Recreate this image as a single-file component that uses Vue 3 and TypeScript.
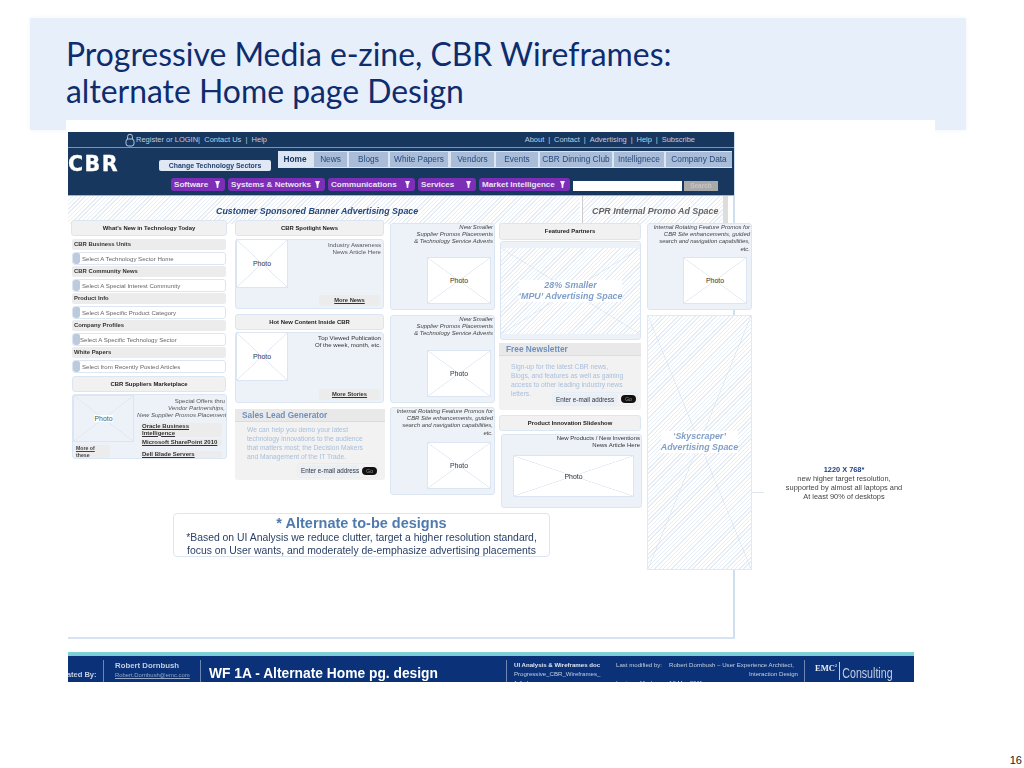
<script setup lang="ts">
interface Tab { label: string; w: number; active?: boolean }
const tabs: Tab[] = [
  { label: 'Home', w: 34, active: true }, { label: 'News', w: 33 }, { label: 'Blogs', w: 39 },
  { label: 'White Papers', w: 58 }, { label: 'Vendors', w: 43 }, { label: 'Events', w: 42 },
  { label: 'CBR Dinning Club', w: 72 }, { label: 'Intellignece', w: 50 }, { label: 'Company Data', w: 66 },
]
const menus: { label: string; w: number }[] = [
  { label: 'Software', w: 54 }, { label: 'Systems & Networks', w: 97 }, { label: 'Communications', w: 87 },
  { label: 'Services', w: 58 }, { label: 'Market Intelligence', w: 91 },
]
const groups: { title: string; select: string; tight?: boolean }[] = [
  { title: 'CBR Business Units', select: 'Select A Technology Sector Home' },
  { title: 'CBR Community News', select: 'Select A Special Interest Community' },
  { title: 'Product Info', select: 'Select A Specific Product Category' },
  { title: 'Company Profiles', select: 'Select A Specific Technology Sector', tight: true },
  { title: 'White Papers', select: 'Select from Recently Posted Articles' },
]
const topRight = ['About', 'Contact', 'Advertising', 'Help', 'Subscribe']
</script>

<template>
  <div class="slide">
    <header class="band">
      <h1>Progressive Media e-zine, CBR Wireframes:<br />alternate Home page Design</h1>
    </header>

    <main class="sheet">
      <section class="wire">
        <div class="topbar">
          <div class="top-left">
            <svg class="lock" width="10" height="14" viewBox="0 0 10 14">
              <path d="M2.6 6V3.6a2.4 2.4 0 0 1 4.8 0V6" fill="none" stroke="#b9cbe2" stroke-width="1" />
              <rect x="1" y="6" width="8" height="7" rx="2.4" fill="none" stroke="#b9cbe2" stroke-width="1" />
            </svg>
            <span>Register or LOGIN|&nbsp; Contact Us &nbsp;|&nbsp; Help</span>
          </div>
          <div class="top-right">
            <template v-for="(t, i) in topRight" :key="t">
              <span>{{ t }}</span><i v-if="i < topRight.length - 1">|</i>
            </template>
          </div>
        </div>

        <nav class="nav">
          <div class="nav-a">
            <div class="logo">CBR</div>
            <div class="sectors">Change Technology Sectors</div>
            <div class="tabs">
              <span v-for="t in tabs" :key="t.label" class="tab" :class="{ active: t.active }" :style="{ width: t.w + 'px' }">{{ t.label }}</span>
            </div>
          </div>
          <div class="nav-b">
            <span v-for="m in menus" :key="m.label" class="menu" :style="{ width: m.w + 'px' }">
              {{ m.label }}
              <svg width="5" height="7" viewBox="0 0 5 7"><path d="M0 0h5L3.6 3.2 3.2 7H1.8L1.4 3.2z" fill="#f2eef8" /></svg>
            </span>
            <div class="search-input"></div>
            <div class="search-btn">Search</div>
          </div>
        </nav>

        <div class="banners">
          <div class="banner hatch"><b>Customer Sponsored Banner Advertising Space</b></div>
          <div class="promo hatch"><b>CPR Internal Promo Ad Space</b></div>
        </div>

        <div class="grid">
          <div class="c1">
            <div class="head">What's New in Technology Today</div>
            <div class="list">
              <template v-for="g in groups" :key="g.title">
                <div class="gray">{{ g.title }}</div>
                <div class="select" :class="{ tight: g.tight }"><i class="blob"></i>{{ g.select }}</div>
              </template>
            </div>
            <div class="head market">CBR Suppliers Marketplace</div>
            <div class="suppliers">
              <div class="sup-left">
                <div class="photo sup-photo"><span>Photo</span></div>
                <div class="more-of"><u>More of<br />these</u></div>
              </div>
              <div class="sup-right">
                <p>Special Offers thru<br /><em>Vendor Partnerships,</em><br /><em>New Supplier Promos Placement</em></p>
                <div class="links">
                  <u>Oracle Business<br />Intelligence</u>
                  <u>Microsoft SharePoint 2010</u>
                  <u>Dell Blade Servers</u>
                </div>
              </div>
            </div>
          </div>

          <div class="c2">
            <div class="head">CBR Spotlight News</div>
            <div class="story">
              <div class="photo story-photo"><span>Photo</span></div>
              <div class="story-text">
                <p>Industry Awareness<br />News Article Here</p>
                <div class="chip"><u>More News</u></div>
              </div>
            </div>
            <div class="head second">Hot New Content Inside CBR</div>
            <div class="story story2">
              <div class="photo story-photo"><span>Photo</span></div>
              <div class="story-text">
                <p>Top Viewed Publication<br />Of the week, month, etc.</p>
                <div class="chip"><u>More Stories</u></div>
              </div>
            </div>
            <div class="lead sales">
              <div class="lead-head">Sales Lead Generator</div>
              <p>We can help you demo your latest technology innovations to the audience that matters most; the Decision Makers and Management of the IT Trade.</p>
              <div class="signup"><span class="email">Enter e-mail address</span><span class="go">Go</span></div>
            </div>
          </div>

          <div class="c3">
            <div class="ad ad1">
              <p><em>New Smaller<br />Supplier Promos Placements<br />&amp; Technology Service Adverts</em></p>
              <div class="photo ad-photo"><span>Photo</span></div>
            </div>
            <div class="ad ad2">
              <p><em>New Smaller<br />Supplier Promos Placements<br />&amp; Technology Service Adverts</em></p>
              <div class="photo ad-photo"><span>Photo</span></div>
            </div>
            <div class="ad ad3">
              <p><em>Internal Rotating Feature Promos for<br />CBR Site enhancements, guided<br />search and navigation capabilities,<br />etc.</em></p>
              <div class="photo ad-photo"><span>Photo</span></div>
            </div>
          </div>

          <div class="c4">
            <div class="head feat">Featured Partners</div>
            <div class="mpu-wrap">
              <div class="mpu hatch cross"><em class="ad-label">28% Smaller<br />‘MPU’ Advertising Space</em></div>
            </div>
            <div class="lead news">
              <div class="lead-head">Free Newsletter</div>
              <p>Sign-up for the latest CBR news,<br />Blogs, and features as well as gaining<br />access to other leading industry news<br />letters.</p>
              <div class="signup up"><span class="email">Enter e-mail address</span><span class="go">Go</span></div>
            </div>
            <div class="head slide-head">Product Innovation Slideshow</div>
            <div class="show">
              <p>New Products / New Inventions<br />News Article Here</p>
              <div class="photo show-photo"><span>Photo</span></div>
            </div>
          </div>

          <div class="c5">
            <div class="ad ad1 wide-ad">
              <p><em>Internal Rotating Feature Promos for<br />CBR Site enhancements, guided<br />search and navigation capabilities,<br />etc.</em></p>
              <div class="photo ad-photo"><span>Photo</span></div>
            </div>
            <div class="sky hatch cross"><em class="ad-label">‘Skyscraper’<br />Advertising Space</em><i class="connector"></i></div>
          </div>

          <div class="alt">
            <h2>* Alternate to-be designs</h2>
            <p>*Based on UI Analysis we reduce clutter, target a higher resolution standard,<br />focus on User wants, and moderately de-emphasize advertising placements</p>
          </div>
        </div>
      </section>

      <aside class="note">
        <b>1220 X 768*</b><br />new higher target resolution,<br />supported by almost all laptops and<br />At least 90% of desktops
      </aside>
    </main>

    <footer class="foot">
      <div class="foot-in">
        <div class="f-by">Created By:</div>
        <div class="f-author"><span>Robert Dornbush</span><u>Robert.Dornbush@emc.com</u></div>
        <div class="f-title">WF 1A - Alternate Home pg. design</div>
        <div class="f-doc"><b>UI Analysis &amp; Wireframes doc</b><span>Progressive_CBR_Wireframes_</span><span>1.A.doc</span></div>
        <div class="f-mod"><span>Last modified by:</span><span>&nbsp;</span><span>Last modified:</span></div>
        <div class="f-who"><span class="first">Robert Dornbush – User Experience Architect,</span><span>Interaction Design</span><span class="left">10 Mar 2011</span></div>
        <div class="f-brand"><b>EMC<sup>2</sup></b><span>Consulting</span></div>
      </div>
    </footer>

    <div class="num">16</div>
  </div>
</template>

<style>
html, body { margin: 0; background: #fff; }
</style>

<style scoped>
.slide { width: 1024px; height: 768px; overflow: hidden; background: #fff; font-family: "Liberation Sans", Arial, sans-serif; color: #333; }
p, h1, h2 { margin: 0; font-weight: normal; }
.band { margin: 18px 58px 0 30px; height: 112px; box-sizing: border-box; padding: 18px 0 0 36px; background: #e7f0fa; box-shadow: 0 0 5px #eef4fb; }
h1 { font: 31.9px/37px Lato, "Open Sans", sans-serif; color: #0e2c6e; }
.sheet { position: relative; display: flex; width: 869px; height: 554px; margin: -10px 0 0 66px; padding: 12px 0 0 2px; box-sizing: border-box; background: #fff; }
.wire { width: 667px; height: 507px; flex: none; box-sizing: border-box; border-right: 2px solid #cfdff0; border-bottom: 2px solid #d7e3f2; filter: blur(.3px); }
.topbar { margin-right: -1px; height: 16px; box-sizing: border-box; padding: 0 39px 0 57px; display: flex; justify-content: space-between; align-items: center; background: #17375f; border-bottom: 1px solid #7f93ad; color: #bfcde0; font-size: 7.5px; }
.top-left { display: flex; align-items: center; gap: 1px; }
.top-right { display: flex; gap: 3.9px; }
.top-right i { font-style: normal; }
.nav { margin-right: -1px; height: 48px; box-sizing: border-box; background: #17375f; border-bottom: 1px solid #a9b4c3; }
.nav-a { position: relative; height: 30px; padding-top: 3px; box-sizing: border-box; display: flex; }
.logo { width: 91px; padding-top: 2px; font: bold 20.6px/22px "DejaVu Sans", sans-serif; letter-spacing: 1.5px; color: #fff; -webkit-text-stroke: .3px #fff; }
.sectors { width: 112px; height: 11px; margin: 9px 7px 0 0; border-radius: 2px; background: #dfe8f4; color: #23416f; font: bold 6.9px/11px "Liberation Sans", sans-serif; text-align: center; }
.tabs { display: flex; gap: 2px; height: 17px; padding: 1px 0; box-sizing: border-box; background: #dce6f2; }
.tab { flex: none; height: 15px; box-sizing: border-box; background: #a9bdd8; color: #264a7e; font-size: 8.3px; line-height: 15px; text-align: center; white-space: nowrap; }
.tab.active { background: #dce6f2; color: #1a3763; font-weight: bold; }
.tabs .tab:nth-child(5) { margin-left: 1px; }
.nav-b { display: flex; align-items: flex-start; gap: 3px; padding-left: 103px; }
.menu { height: 13px; box-sizing: border-box; display: flex; align-items: center; justify-content: space-between; padding: 0 5px 0 3px; border-radius: 3px; background: #7d2eb7; color: #e9e4f1; font: bold 8.1px/13px "Liberation Sans", sans-serif; white-space: nowrap; }
.search-input { width: 109px; height: 10px; margin-top: 3px; background: #fff; }
.search-btn { width: 34px; height: 10px; margin: 3px 0 0 -1px; background: #a9a9a9; color: #c6c6c6; font: bold 6.5px/10px "Liberation Sans", sans-serif; text-align: center; }
.hatch { background-color: #fff; background-image: repeating-linear-gradient(135deg, #e7edf5 0 1px, #fff 1px 3px); }
.cross { position: relative; }
.cross::before { content: ""; position: absolute; inset: 0; background:
  linear-gradient(to top right, transparent calc(50% - .6px), #d9e4f2 50%, transparent calc(50% + .6px)),
  linear-gradient(to bottom right, transparent calc(50% - .6px), #d9e4f2 50%, transparent calc(50% + .6px)); }
.banners { display: flex; height: 28px; margin-right: -1px; }
.banner { width: 512px; box-sizing: border-box; padding: 10px 0 0 148px; color: #26477b; font-size: 8.85px; line-height: 11px; white-space: nowrap; }
.banner b { font-style: italic; }
.promo { width: 146px; margin-left: 2px; border-left: 1px solid #ccc; box-sizing: border-box; padding: 10px 0 0 9px; color: #666; font-size: 8.9px; line-height: 11px; white-space: nowrap; border-right: 5px solid #ddd; }
.promo b { font-style: italic; }
.grid { display: grid; grid-template-columns: 164px 155px 109px 148px 105px; grid-template-rows: 292px auto; justify-items: start; margin: -4px 0 0 3px; width: 681px; position: relative; }
.head { height: 16px; box-sizing: border-box; border: 1px solid #dce6f2; border-radius: 3px; background: #f1f1f1; color: #222; font: bold 5.9px/14px "Liberation Sans", sans-serif; text-align: center; }
.c1 { width: 156px; }
.list { display: flex; flex-direction: column; gap: 1.5px; margin: 3px 0 0 1px; width: 154px; }
.gray { height: 11px; padding-left: 2px; border-radius: 2px; background: #ececec; color: #333; font: bold 5.9px/11px "Liberation Sans", sans-serif; }
.select { height: 13px; display: flex; align-items: center; gap: 2px; box-sizing: border-box; border: 1px solid #dce6f2; border-radius: 3px; background: #fff; color: #666; font-size: 6.1px; white-space: nowrap; }
.select.tight { gap: 0; }
.blob { width: 7px; height: 11px; margin-left: 0; border-radius: 2px 2px 3px 3px; background: #bccadb; flex: none; }
.market { margin: 3.5px 0 2px 1px; width: 154px; }
.suppliers { display: flex; height: 65px; margin-left: 1px; width: 155px; box-sizing: border-box; border: 1px solid #dce6f2; border-radius: 3px; background: #edf2f8; overflow: hidden; }
.sup-left { width: 64px; flex: none; }
.photo { position: relative; flex: none; display: flex; align-items: center; justify-content: center; box-sizing: border-box; border: 1px solid #dce6f2; background:
  linear-gradient(to top right, transparent calc(50% - .6px), #dbe5f3 50%, transparent calc(50% + .6px)),
  linear-gradient(to bottom right, transparent calc(50% - .6px), #dbe5f3 50%, transparent calc(50% + .6px)), #fff; color: #333; font-size: 6.9px; }
.sup-photo { width: 61px; height: 47px; background-color: #edf2f8; color: #555; }
.sup-photo span { background: #fff; }
.more-of { width: 34px; height: 13px; margin: 3px 0 0 2px; padding-left: 1px; border-radius: 2px; background: #ececec; font: bold 5.2px/6.5px "Liberation Sans", sans-serif; color: #444; }
.sup-right { flex: 1; min-width: 0; }
.sup-right p { padding: 2px 1px 0 0; text-align: right; font-size: 6.1px; line-height: 7.2px; color: #555; white-space: nowrap; }
.links { display: flex; flex-direction: column; gap: 2px; margin: 4px 4px 0 3px; font: bold 6px/7px "Liberation Sans", sans-serif; color: #333; white-space: nowrap; }
.links u { padding-left: 2px; border-radius: 3px; background: #ececec; }
.links u:last-child { margin-top: 3px; }
.c2 { width: 150px; }
.c2 .head { width: 149px; }
.story { display: flex; height: 70px; margin-top: 3px; width: 149px; box-sizing: border-box; border: 1px solid #dce6f2; border-radius: 3px; background: #edf2f8; }
.story2 { height: 71px; margin-top: 2px; }
.story-photo { width: 52px; height: 49px; margin: -1px 0 0 0; }
.story-text { flex: 1; display: flex; flex-direction: column; justify-content: space-between; align-items: flex-end; padding: 1px 2px 2px 0; }
.story-text p { text-align: right; font-size: 6.1px; line-height: 7.2px; color: #555; white-space: nowrap; }
.story2 .story-text p { color: #333; }
.chip { width: 61px; height: 11px; margin-right: 1px; border-radius: 2px; background: #ececec; color: #333; font: bold 5.8px/11px "Liberation Sans", sans-serif; text-align: center; }
.second { margin-top: 5px; }
.lead { box-sizing: border-box; border-radius: 3px; background: #f2f2f2; }
.lead-head { height: 12px; padding-left: 7px; border-bottom: 1px solid #d2deee; background: #e9e9e9; color: #6d91bf; font: bold 8.3px/12px "Liberation Sans", sans-serif; }
.lead p { color: #a8bedb; font-size: 6.7px; line-height: 9px; }
.sales { width: 150px; height: 71px; margin-top: 6px; }
.sales p { padding: 3px 20px 0 12px; }
.signup { display: flex; align-items: center; gap: 3px; height: 15px; box-sizing: border-box; margin: 2px 7px 0 auto; width: 81px; padding: 0 1px; border: 1px solid #e7edf5; border-radius: 3px; }
.email { flex: 1; height: 11px; padding-left: 2px; border-radius: 3px; background: #e9eff7; color: #333; font-size: 6.3px; line-height: 11px; white-space: nowrap; }
.go { width: 15px; height: 8px; border-radius: 4px; background: #111; color: #999; font-size: 5px; line-height: 8px; text-align: center; flex: none; }
.c3 { width: 105px; display: flex; flex-direction: column; gap: 5px; margin-top: 3px; }
.ad { display: flex; flex-direction: column; box-sizing: border-box; width: 105px; border: 1px solid #dce6f2; border-radius: 3px; background: #edf2f8; padding: 0 1px 5px 0; }
.ad p { text-align: right; font-size: 5.95px; line-height: 7.2px; color: #444; white-space: nowrap; }
.ad1 { height: 87px; }
.ad2 { height: 88px; }
.ad3 { height: 88px; margin-top: -1px; }
.ad-photo { width: 64px; height: 47px; margin: auto 2px 0 auto; }
.c4 { width: 143px; margin-top: 3px; }
.feat { height: 17px; line-height: 15px; width: 142px; }
.mpu-wrap { width: 141px; height: 99px; margin: 1px 0 0 1px; box-sizing: border-box; padding: 6px 0 5px; border: 1px solid #dce6f2; border-radius: 3px; background: #edf2f8; }
.mpu { height: 100%; display: flex; align-items: center; justify-content: center; }
.ad-label { position: relative; background: #fff; color: #7f9fc9; font: italic bold 8.9px/11px "Liberation Sans", sans-serif; text-align: center; white-space: nowrap; }
.news { width: 142px; height: 67px; margin-top: 3px; }
.news p { padding: 6px 0 0 12px; white-space: nowrap; }
.up { width: 86px; margin: -6px 3px 0 auto; height: 14px; position: relative; }
.slide-head { width: 142px; margin-top: 5px; }
.show { width: 141px; height: 74px; margin: 3px 0 0 2px; box-sizing: border-box; border: 1px solid #dce6f2; border-radius: 3px; background: #edf2f8; }
.show p { padding-right: 1px; text-align: right; font-size: 6px; line-height: 7.2px; color: #333; white-space: nowrap; }
.show-photo { width: 121px; height: 42px; margin: 6px 0 0 11px; }
.c5 { grid-column: 5; grid-row: 1 / 3; width: 105px; margin-top: 3px; }
.c5 .ad-photo { margin-right: 3px; }
.sky { width: 105px; height: 255px; margin-top: 5px; display: flex; align-items: center; justify-content: center; box-sizing: border-box; border: 1px solid #e1e9f4; }
.sky .ad-label { top: -1px; }
.connector { position: absolute; left: 104px; top: 176px; width: 12px; height: 1px; background: #dce6f2; }
.alt { grid-column: 1 / 5; grid-row: 2; box-sizing: border-box; width: 377px; height: 44px; margin: 1px 0 0 102px; border: 1px solid #dce6f2; border-radius: 4px; background: #fff; text-align: center; }
.alt h2 { color: #507aae; font: bold 14.5px/18px "Liberation Sans", sans-serif; }
.alt p { color: #2a3f66; font-size: 10.4px; line-height: 12.5px; white-space: nowrap; }
.note { flex: none; width: 120px; margin: 333px 0 0 49px; text-align: center; color: #444; font-size: 7.4px; line-height: 9px; white-space: nowrap; align-self: flex-start; filter: blur(.25px); }
.note b { color: #1f3f85; font-size: 7.4px; }
.foot { width: 846px; height: 30px; margin: -22px 0 0 68px; position: relative; overflow: hidden; box-sizing: border-box; border-top: 4px solid; border-image: linear-gradient(#7fd0d8, #3a97ab) 1; background: #0b3278; color: #c3cde0; filter: blur(.3px); }
.foot-in { display: flex; height: 26px; position: relative; }
.f-by { width: 50px; margin: 4px 0 0 -14px; flex: none; height: 22px; box-sizing: border-box; padding: 10px 7px 0 0; font: bold 7.6px/10px "Liberation Sans", sans-serif; white-space: nowrap; border-right: 1px solid #6f87b0; text-align: right; }
.f-author { width: 97px; margin-top: 4px; padding: 1px 0 0 11px; box-sizing: border-box; border-right: 1px solid #6f87b0; display: flex; flex-direction: column; flex: none; font-size: 7.8px; font-weight: bold; line-height: 10px; }
.f-author u { font-size: 5.9px; font-weight: normal; line-height: 9px; color: #93a7c9; white-space: nowrap; }
.f-title { width: 306px; flex: none; box-sizing: border-box; padding: 6px 0 0 8px; border-right: 1px solid #6f87b0; margin-top: 4px; color: #fff; font: bold 13.8px/16px "Liberation Sans", sans-serif; white-space: nowrap; }
.f-doc { width: 109px; flex: none; display: flex; flex-direction: column; padding: 4px 0 0 7px; box-sizing: border-box; font-size: 6.1px; line-height: 9px; white-space: nowrap; }
.f-doc b { color: #dfe5f0; }
.f-mod { width: 53px; flex: none; display: flex; flex-direction: column; padding-top: 4px; box-sizing: border-box; font-size: 6.1px; line-height: 9px; white-space: nowrap; }
.f-who { width: 136px; flex: none; display: flex; flex-direction: column; padding: 0 6px 0 0; border-right: 1px solid #6f87b0; box-sizing: border-box; text-align: right; font-size: 6.1px; line-height: 9px; white-space: nowrap; margin-top: 4px; }
.f-who .first { padding-right: 4px; }
.f-who .left { text-align: left; }
.f-brand { flex: none; display: flex; align-items: flex-start; height: 22px; margin-top: 6px; padding-left: 10px; color: #e6ebf4; }
.f-brand b { font: bold 8.6px/12px "Liberation Serif", serif; padding-right: 2px; border-right: 1px solid #c3cde0; height: 18px; }
.f-brand sup { font-size: 4px; line-height: 0; }
.f-brand span { padding: 4px 0 0 3px; font: 14px/14px "Liberation Sans", sans-serif; color: #c3cde0; transform: scaleX(.76); transform-origin: left top; }
.num { margin: 72px 2px 0 0; text-align: right; color: #222; font-size: 11px; line-height: 13px; }
</style>
